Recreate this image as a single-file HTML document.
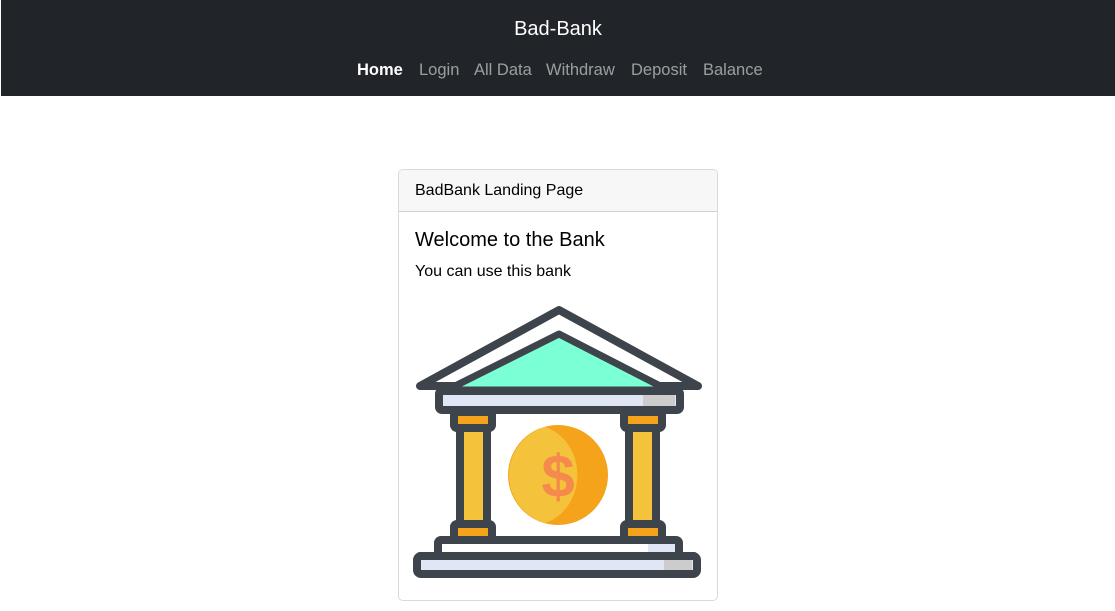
<!DOCTYPE html>
<html><head><style>
body{margin:0;width:1115px;height:611px;overflow:hidden;background:#fff;font-family:"Liberation Sans",sans-serif;}
.nav{height:96px;background:#212529;position:relative;border-left:1px solid #fff;}
.brand{position:absolute;top:18px;width:100%;text-align:center;color:#fff;font-size:20px;}
.links span,.links b{position:absolute;top:61px;font-size:16.5px;color:rgba(255,255,255,.55);white-space:nowrap;}
.links b{color:#fff}
.card{position:absolute;left:398px;top:169px;width:318px;height:430px;border:1px solid rgba(0,0,0,.15);border-radius:5px;overflow:hidden;}
.hd{height:41px;background:#f7f7f7;border-bottom:1px solid rgba(0,0,0,.15);font-size:16px;line-height:41px;padding-left:16px;}
h5{margin:0;position:absolute;left:16px;top:59px;font-size:20px;font-weight:500;}
p{margin:0;position:absolute;left:16px;top:93px;font-size:16px;}
svg{position:absolute;left:0;top:0}
</style></head><body>
<div class="nav"><div class="brand">Bad-Bank</div>
<div class="links"><b style="left:356px">Home</b><span style="left:418px">Login</span><span style="left:473px">All Data</span><span style="left:545px">Withdraw</span><span style="left:630px">Deposit</span><span style="left:702px">Balance</span></div></div>
<div class="card"><div class="hd">BadBank Landing Page</div><h5>Welcome to the Bank</h5><p>You can use this bank</p></div>
<svg width="1115" height="611" stroke="#3e444b" stroke-width="8" stroke-linejoin="round" stroke-linecap="round">
<path d="M559 310 L420 386 L698 386 Z" fill="#fff"/>
<path d="M559 334 L447 390 L668 390 Z" fill="#7bffd4" stroke-width="7"/>
<rect x="439" y="391" width="241" height="19" rx="3" fill="#e0e6f5"/>
<rect x="643" y="395" width="32" height="11" fill="#ccc" stroke="none"/>
<line x1="447" y1="391" x2="607" y2="391"/><line x1="628" y1="391" x2="668" y2="391"/>
<rect x="460" y="428" width="27" height="98" fill="#f5c33b"/>
<rect x="629" y="428" width="27" height="98" fill="#f5c33b"/>
<rect x="454" y="412" width="38" height="16" rx="3" fill="#f4a31a"/>
<rect x="624" y="412" width="38" height="16" rx="3" fill="#f4a31a"/>
<rect x="454" y="524" width="38" height="16" rx="3" fill="#f4a31a"/>
<rect x="624" y="524" width="38" height="16" rx="3" fill="#f4a31a"/>
<circle cx="558" cy="475" r="50" fill="#f4a31a" stroke="none"/>
<path d="M545 427 A50 50 0 0 0 545 523 A45 50 0 0 0 545 427Z" fill="#f5c33b" stroke="none"/>
<text x="558" y="497" text-anchor="middle" font-size="60" font-weight="bold" font-family="Liberation Sans" fill="#f48a4b" stroke="none">$</text>
<rect x="438" y="540" width="241" height="16" rx="3" fill="#fff"/>
<rect x="648" y="544" width="27" height="10" fill="#e0e6f5" stroke="none"/>
<rect x="417" y="556" width="280" height="18" rx="4" fill="#e0e6f5"/>
<rect x="664" y="560" width="28" height="10" fill="#ccc" stroke="none"/>
<line x1="420" y1="556" x2="462" y2="556"/><line x1="482" y1="556" x2="694" y2="556"/>
</svg>
</body></html>
